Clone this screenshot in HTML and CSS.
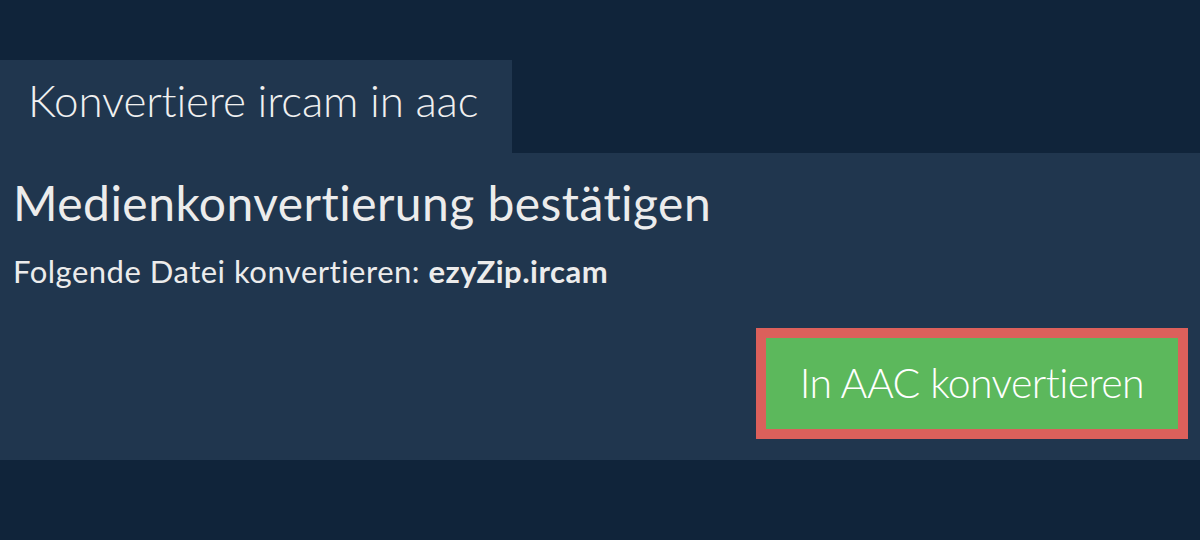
FILE: index.html
```html
<!DOCTYPE html>
<html lang="de">
<head>
<meta charset="utf-8">
<title>Konvertiere ircam in aac</title>
<link rel="stylesheet" href="styles.css">
</head>
<body>
<div class="page">
  <div class="tab">Konvertiere ircam in aac</div>
  <section class="panel">
    <h1 class="title">Medienkonvertierung bestätigen</h1>
    <p class="subtitle">Folgende Datei konvertieren: <strong>ezyZip.ircam</strong></p>
    <div class="actions">
      <button class="convert" type="button">In AAC konvertieren</button>
    </div>
  </section>
</div>
</body>
</html>
```

FILE: styles.css
```css
html, body {
  margin: 0;
  padding: 0;
}
body {
  background: #10243a;
  font-family: Lato, "Noto Sans", sans-serif;
  color: #ececec;
  width: 1200px;
  height: 540px;
  overflow: hidden;
  font-variant-ligatures: none;
}
.page {
  padding-top: 60px;
}
.tab {
  display: inline-block;
  box-sizing: border-box;
  width: 512px;
  height: 93px;
  background: #20364e;
  font-weight: 300;
  font-size: 44px;
  letter-spacing: -0.17px;
  line-height: 1.2;
  padding: 14px 0 0 28px;
  color: #f0f0f0;
  vertical-align: top;
}
.panel {
  background: #20364e;
  height: 307px;
  box-sizing: border-box;
  padding: 21px 12px 0 13px;
  display: flex;
  flex-direction: column;
}
.title {
  margin: 0;
  font-size: 48px;
  font-weight: 400;
  letter-spacing: 0.45px;
  line-height: 1.2;
}
.subtitle {
  margin: 21px 0 0 0;
  font-size: 31px;
  letter-spacing: 0.5px;
  line-height: 1.2;
}
.subtitle strong {
  font-weight: 700;
}
.actions {
  display: flex;
  justify-content: flex-end;
  margin-top: 38px;
}
.convert {
  font-family: Lato, "Noto Sans", sans-serif;
  font-variant-ligatures: none;
  font-weight: 300;
  font-size: 41px;
  letter-spacing: -0.6px;
  line-height: 1.2;
  color: #ffffff;
  background: #5cb85c;
  border: 10px solid #dc605b;
  padding: 20px 34px 22px 34px;
  margin: 0;
  cursor: pointer;
}
```
